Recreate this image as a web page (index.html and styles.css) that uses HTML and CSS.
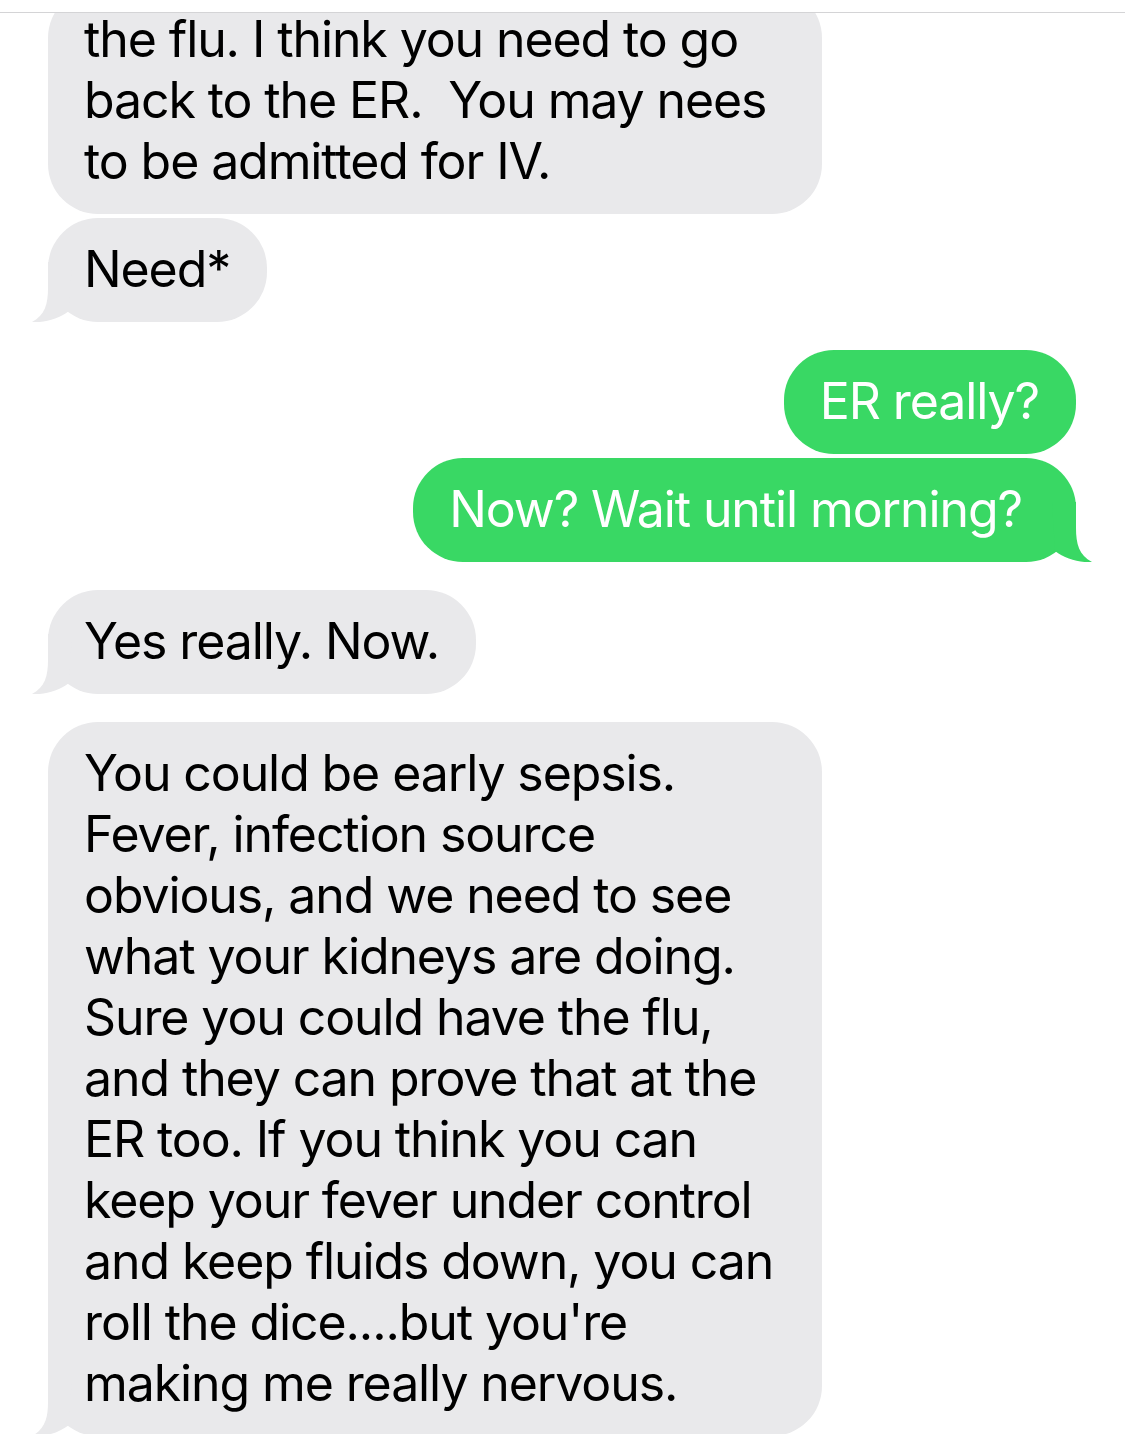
FILE: index.html
```html
<!DOCTYPE html>
<html>
<head>
<meta charset="utf-8">
<link rel="stylesheet" href="styles.css">
</head>
<body>
<div class="thread">
  <div class="msg recv first wide">the flu. I think you need to go<br>back to the ER.&nbsp; You may nees<br>to be admitted for IV.</div>
  <div class="msg recv tail same">Need*<svg class="tl" viewBox="0 0 40 60"><path d="M16,0 L16,26 C16,42 13,53 0,60 C12,61 27,57 37,49 L40,0 Z"/></svg></div>
  <div class="msg sent">ER really?</div>
  <div class="msg sent tail same trail">Now? Wait until morning?&nbsp;<svg class="tr" viewBox="0 0 40 60"><path d="M16,0 L16,26 C16,42 13,53 0,60 C12,61 27,57 37,49 L40,0 Z"/></svg></div>
  <div class="msg recv tail">Yes really. Now.<svg class="tl" viewBox="0 0 40 60"><path d="M16,0 L16,26 C16,42 13,53 0,60 C12,61 27,57 37,49 L40,0 Z"/></svg></div>
  <div class="msg recv tail wide">You could be early sepsis.<br>Fever, infection source<br>obvious, and we need to see<br>what your kidneys are doing.<br>Sure you could have the flu,<br>and they can prove that at the<br>ER too. If you think you can<br>keep your fever under control<br>and keep fluids down, you can<br>roll the dice....but you're<br>making me really nervous.<svg class="tl" viewBox="0 0 40 60"><path d="M16,0 L16,26 C16,42 13,53 0,60 C12,61 27,57 37,49 L40,0 Z"/></svg></div>
</div>
</body>
</html>
```
FILE: styles.css
```css
html, body {
  margin: 0;
  padding: 0;
  background: #ffffff;
}
body {
  width: 1125px;
  height: 1434px;
  overflow: hidden;
  font-family: Inter, "Liberation Sans", sans-serif;
}
.thread {
  margin-top: 12px;
  border-top: 1px solid #d4d4d6;
  display: flex;
  flex-direction: column;
  overflow: hidden;
  height: 1421px;
}
.msg {
  position: relative;
  box-sizing: border-box;
  padding: 21px 37px 22px 36px;
  border-radius: 50px;
  font-size: 50px;
  line-height: 61px;
  letter-spacing: -1.1px;
  white-space: nowrap;
  margin-top: 28px;
}
.msg.same {
  margin-top: 4px;
}
.msg.first {
  margin-top: -25px;
}
.msg.wide {
  width: 774px;
}
.msg.trail {
  padding-right: 41px;
}
.recv {
  align-self: flex-start;
  margin-left: 48px;
  background: #e9e9eb;
  color: #000000;
}
.sent {
  align-self: flex-end;
  margin-right: 49px;
  background: #39d864;
  color: #ffffff;
}
.msg svg {
  position: absolute;
  bottom: 0;
  width: 40px;
  height: 60px;
}
.recv svg path { fill: #e9e9eb; }
.sent svg path { fill: #39d864; }
.tl {
  left: -16px;
}
.tr {
  right: -16px;
  transform: scaleX(-1);
}
```
